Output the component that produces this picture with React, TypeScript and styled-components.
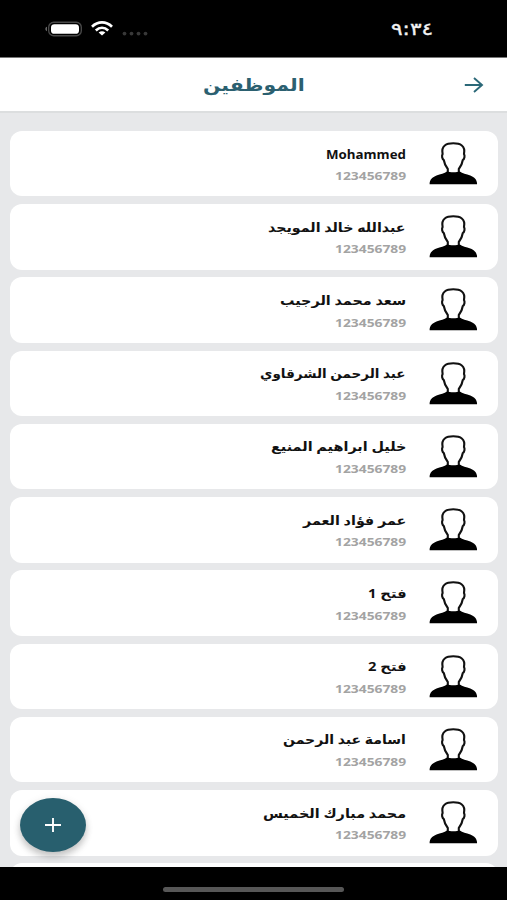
import React, { useLayoutEffect, useRef, useState } from "react";
import styled, { createGlobalStyle } from "styled-components";

const GlobalStyle = createGlobalStyle`
  * { box-sizing: border-box; }
  body { margin: 0; background: #000; overflow: hidden; }
`;

const Screen = styled.div`
  width: 507px;
  height: 900px;
  display: flex;
  flex-direction: column;
  background: #000;
  font-family: "Open Sans", "DejaVu Sans", sans-serif;
  overflow: hidden;
`;

const StatusBar = styled.div`
  height: 57px;
  flex: none;
  display: flex;
  align-items: flex-start;
  justify-content: space-between;
  padding: 18px 74px 0 44px;
  direction: ltr;
  color: #f2f2f2;
`;

const StatusIcons = styled.svg`
  width: 108px;
  height: 22px;
  display: block;
`;

const Clock = styled.div`
  font: 17px/22px "DejaVu Sans", sans-serif;
  -webkit-text-stroke: 0.35px #f2f2f2;
`;

const Header = styled.header`
  height: 56px;
  flex: none;
  display: grid;
  grid-template-columns: 1fr auto 1fr;
  align-items: center;
  padding: 0 23px;
  background: #fff;
  border-top: 1px solid #777;
  border-bottom: 2px solid #dcdedf;
`;

const Title = styled.h1`
  grid-column: 2;
  margin: 0;
  font-family: "DejaVu Sans", sans-serif;
  font-size: 17px;
  line-height: 24px;
  font-weight: 700;
  color: #2b6070;
`;

const BackButton = styled.button`
  justify-self: end;
  padding: 0;
  border: 0;
  background: none;
  line-height: 0;
`;

const List = styled.main`
  height: 754px;
  flex: none;
  display: flex;
  flex-direction: column;
  gap: 7.85px;
  padding: 18px 9.5px 0 10px;
  background: #e7e8ea;
  overflow: hidden;
  position: relative;
`;

const Card = styled.article`
  height: 65.4px;
  flex: none;
  display: flex;
  flex-direction: row;
  justify-content: flex-end;
  gap: 23px;
  padding: 10px 19.5px 0 0;
  background: #fff;
  border-radius: 12px;
`;

const Details = styled.div`
  display: flex;
  flex-direction: column;
  align-items: flex-end;
  padding-top: 2.5px;
`;

const Name = styled.div`
  font-family: "Open Sans", "DejaVu Sans", sans-serif;
  font-size: 12.8px;
  line-height: 20px;
  height: 20px;
  font-weight: 700;
  color: #111;
`;

const Phone = styled.div`
  margin-top: 3.6px;
  font-size: 11.3px;
  line-height: 18px;
  font-weight: 700;
  color: #a3a3a3;
`;

const Avatar = styled.svg`
  width: 49px;
  height: 45px;
  flex: none;
`;

const FabButton = styled.button`
  position: absolute;
  left: 20px;
  top: 685px;
  width: 66px;
  height: 54px;
  padding: 0;
  display: grid;
  place-items: center;
  border: 0;
  border-radius: 50%;
  background: #285f6e;
  box-shadow: 0 5px 7px rgba(0, 0, 0, 0.2), 0 1px 9px rgba(0, 0, 0, 0.08);
`;

const HomeArea = styled.footer`
  flex: 1;
  display: flex;
  justify-content: center;
  padding-top: 20px;
`;

const HomeIndicator = styled.div`
  width: 181px;
  height: 5px;
  border-radius: 3px;
  background: #575757;
`;

const FitBox = styled.span<{ $width: number }>`
  display: block;
  width: ${(p) => p.$width}px;
  white-space: nowrap;
  direction: ltr;
`;

const FitInner = styled.span`
  display: inline-block;
  transform-origin: 0 50%;
`;

function Fit({ width, dir = "rtl", children }: { width: number; dir?: "rtl" | "ltr"; children: string }) {
  const ref = useRef<HTMLSpanElement>(null);
  const [scale, setScale] = useState(1);
  useLayoutEffect(() => {
    if (ref.current) setScale(width / ref.current.offsetWidth);
  }, [width, children]);
  return (
    <FitBox $width={width}>
      <FitInner ref={ref} dir={dir} style={{ transform: `scaleX(${scale})` }}>{children}</FitInner>
    </FitBox>
  );
}

const employees = [
  { name: "Mohammed", width: 80 },
  { name: "عبدالله خالد المويجد", width: 138 },
  { name: "سعد محمد الرجيب", width: 126 },
  { name: "عبد الرحمن الشرقاوي", width: 146 },
  { name: "خليل ابراهيم المنيع", width: 135 },
  { name: "عمر فؤاد العمر", width: 103 },
  { name: "فتح 1", width: 38 },
  { name: "فتح 2", width: 38 },
  { name: "اسامة عبد الرحمن", width: 123 },
  { name: "محمد مبارك الخميس", width: 143 },
];

const Person = () => (
  <Avatar viewBox="0 0 49 45">
    <path
      d="M18.8 32V28C16.8 25.5 15.3 22.5 14.8 19C13 17.8 12.6 14.8 13.6 13C12.9 9.5 13.6 6.2 15.8 4.5C17.8 2.9 20.6 2.3 24.3 2.3S30.8 2.9 32.8 4.5C35 6.2 35.7 9.5 35 13C36 14.8 35.6 17.8 33.8 19C33.3 22.5 31.8 25.5 29.8 28V32"
      fill="#fff" stroke="#111" strokeWidth="2.1"
    />
    <path d="M.6 43.2C.6 38.6 3.4 36.2 7.5 34.5C11.5 32.9 15.5 32.2 18 30.4C20.5 31.4 28.3 31.4 30.8 30.4C33.3 32.2 37.3 32.9 41.3 34.5C45.4 36.2 48.1 38.6 48.1 43.2Z" fill="#000" />
  </Avatar>
);

export default function App() {
  return (
    <Screen>
      <GlobalStyle />
      <StatusBar>
        <StatusIcons viewBox="0 0 108 22">
          <path d="M3 8.8C.8 9.4.8 12.6 3 13.2Z" fill="#666" />
          <rect x="4.7" y="4.2" width="32.6" height="13.6" rx="5" fill="none" stroke="#484848" strokeWidth="1.4" />
          <rect x="7" y="6.2" width="28" height="9.6" rx="3.4" fill="#fff" />
          <g fill="none" stroke="#fff" strokeWidth="2.7">
            <path d="M48 8.7C54 3 62 3 68 8.7" />
            <path d="M51.8 12.4C55.6 9 60.4 9 64.2 12.4" />
          </g>
          <path d="M54.6 14.4C56.7 12.8 59.3 12.8 61.4 14.4L58 17.4Z" fill="#fff" />
          <g fill="#383838">
            <circle cx="80.5" cy="15.6" r="1.9" />
            <circle cx="87.5" cy="15.6" r="1.9" />
            <circle cx="94.5" cy="15.6" r="1.9" />
            <circle cx="101.5" cy="15.6" r="1.9" />
          </g>
        </StatusIcons>
        <Clock><Fit width={42} dir="ltr">{"\u202D٩:٣٤\u202C"}</Fit></Clock>
      </StatusBar>
      <Header>
        <Title><Fit width={102}>الموظفين</Fit></Title>
        <BackButton aria-label="رجوع">
          <svg width="20" height="18" viewBox="0 0 20 18" fill="none" stroke="#2b6878" strokeWidth="1.9">
            <path d="M.8 9H18M10 2L18 9L10 16" />
          </svg>
        </BackButton>
      </Header>
      <List>
        {employees.map((e) => (
          <Card key={e.name}>
            <Details>
              <Name><Fit width={e.width}>{e.name}</Fit></Name>
              <Phone><Fit width={71} dir="ltr">123456789</Fit></Phone>
            </Details>
            <Person />
          </Card>
        ))}
        <Card />
        <FabButton aria-label="إضافة">
          <svg width="18" height="16" viewBox="0 0 18 16" stroke="#fff" strokeWidth="1.9">
            <path d="M1 8H17M9 1V15" />
          </svg>
        </FabButton>
      </List>
      <HomeArea><HomeIndicator /></HomeArea>
    </Screen>
  );
}
